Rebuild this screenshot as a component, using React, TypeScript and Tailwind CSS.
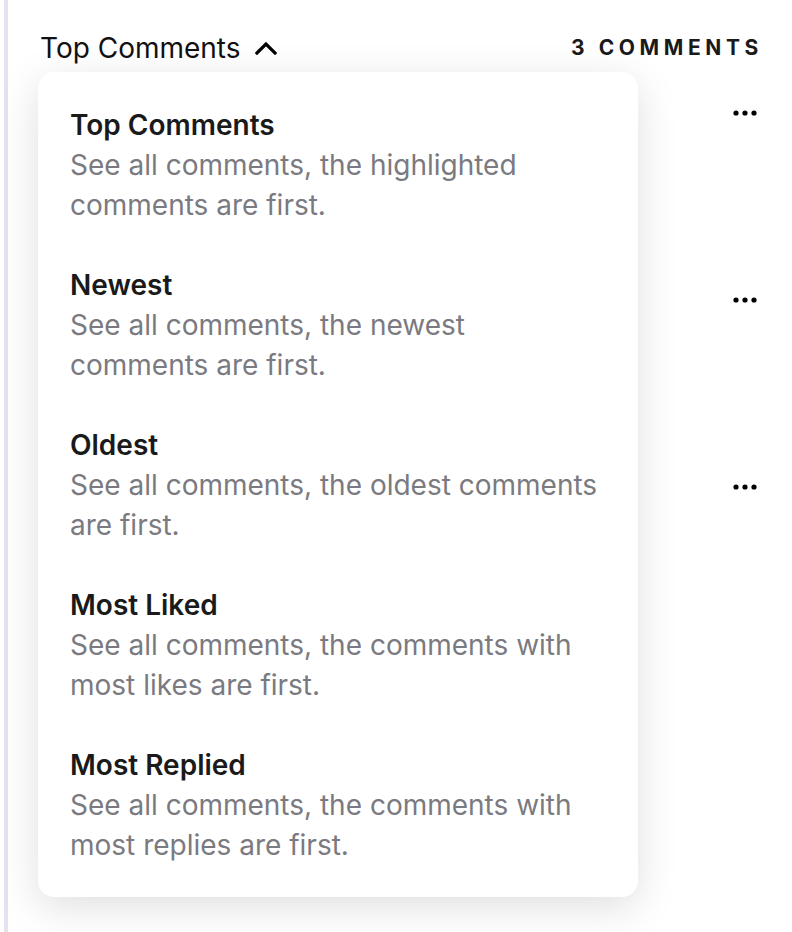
import React from "react";

const options = [
  { title: "Top Comments", desc: "See all comments, the highlighted comments are first." },
  { title: "Newest", desc: "See all comments, the newest comments are first." },
  { title: "Oldest", desc: "See all comments, the oldest comments are first." },
  { title: "Most Liked", desc: "See all comments, the comments with most likes are first." },
  { title: "Most Replied", desc: "See all comments, the comments with most replies are first." },
];

function Dots() {
  return (
    <svg width="24" height="6" viewBox="0 0 24 6" aria-hidden>
      <circle cx="3" cy="3" r="2.6" fill="#000" />
      <circle cx="12" cy="3" r="2.6" fill="#000" />
      <circle cx="21" cy="3" r="2.6" fill="#000" />
    </svg>
  );
}

export default function App() {
  return (
    <div
      className="w-[792px] h-[932px] bg-white overflow-hidden"
      style={{ fontFamily: "Inter, 'Noto Sans', sans-serif" }}
    >
      <div className="relative ml-1 h-full border-l-4 border-[#e4e2ef] pl-8 pr-[29px]">
        <div className="flex items-center justify-between pt-7">
          <button className="flex items-center gap-[14px] h-10 text-[28px] leading-10 text-[#111]">
            <span>Top Comments</span>
            <svg width="22" height="14" viewBox="0 0 22 14" aria-hidden>
              <path d="M2 12 L11 3 L20 12" fill="none" stroke="#000" strokeWidth="3.2" strokeLinecap="square" />
            </svg>
          </button>
          <span className="text-[21px] font-bold tracking-[0.22em] text-[#1a1a1a] leading-10">
            3 COMMENTS
          </span>
        </div>

        <div className="flex flex-col items-end pr-[6px] pt-[42px]">
          <div className="h-[187px]"><Dots /></div>
          <div className="h-[187px]"><Dots /></div>
          <div className="h-[187px]"><Dots /></div>
        </div>

        <div className="absolute left-[30px] top-[72px] w-[600px] rounded-2xl bg-white px-8 pt-[33px] pb-8 shadow-[0_10px_40px_rgba(0,0,0,0.13)]">
          <div className="flex flex-col gap-10">
            {options.map((o) => (
              <div key={o.title} className="text-[28px] leading-10">
                <div className="font-semibold text-[#1a1a1a]">{o.title}</div>
                <div className="text-[#7a7a80]">{o.desc}</div>
              </div>
            ))}
          </div>
        </div>
      </div>
    </div>
  );
}
